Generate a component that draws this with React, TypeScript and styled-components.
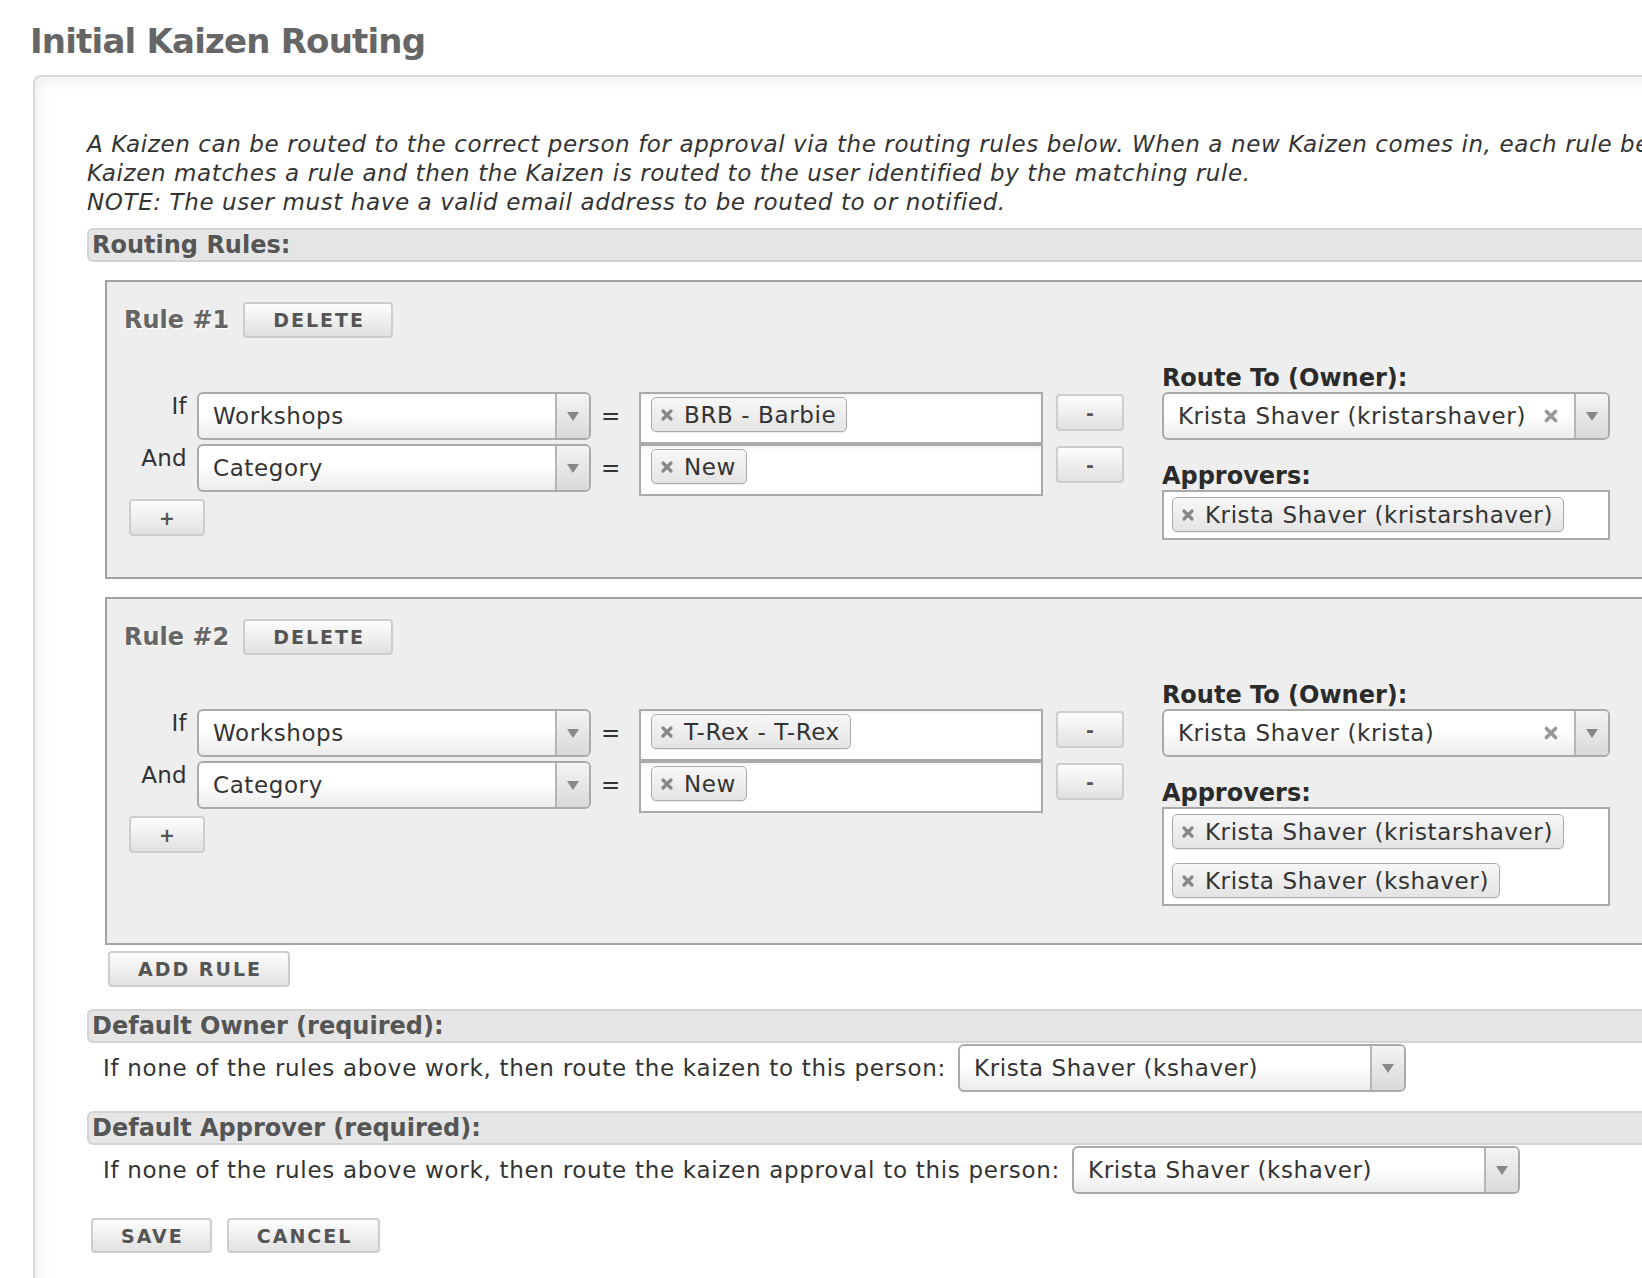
import styled, { createGlobalStyle } from "styled-components";

const GlobalStyle = createGlobalStyle`
  html, body {
    margin: 0;
    padding: 0;
    background: #fff;
    overflow: hidden;
  }
  body {
    font-family: "DejaVu Sans", Verdana, sans-serif;
    color: #333;
  }
`;

const Page = styled.div`
  width: 1800px;
  padding: 21px 0 0 30px;
`;

const Title = styled.h1`
  margin: 0 0 14px;
  font-size: 34px;
  line-height: 40px;
  font-weight: bold;
  letter-spacing: -0.8px;
  color: #666;
`;

const Panel = styled.div`
  margin-left: 3px;
  min-height: 1300px;
  padding: 53px 0 60px 52px;
  border: 2px solid #d9d9d9;
  border-right: none;
  border-radius: 8px 0 0 0;
  box-shadow: inset 5px 5px 14px rgba(0, 0, 0, 0.06);
`;

const Intro = styled.div`
  margin-bottom: 11px;
  font-size: 23px;
  line-height: 29px;
  font-style: italic;
  letter-spacing: 0.6px;
  color: #333;
  white-space: nowrap;
`;

const SectionBar = styled.div<{ $top?: number }>`
  box-sizing: border-box;
  height: 34px;
  margin-top: ${p => p.$top ?? 0}px;
  padding-left: 3px;
  background: #e5e5e5;
  border: 2px solid #d4d4d4;
  border-right: none;
  border-radius: 6px 0 0 6px;
  font-size: 24px;
  line-height: 30px;
  font-weight: bold;
  color: #555;
  white-space: nowrap;
`;

const RuleBox = styled.div`
  margin: 18px 0 0 18px;
  padding: 20px 0 37px 17px;
  background: #eee;
  border: 2px solid #a3a3a3;
  border-right: none;
`;

const RuleHead = styled.div`
  display: flex;
  align-items: center;
  gap: 14px;
  height: 36px;
`;

const RuleTitle = styled.span`
  font-size: 24px;
  font-weight: bold;
  color: #666;
  text-shadow: 1px 1px 0 #fff;
`;

const Button = styled.button<{ $h?: number }>`
  box-sizing: border-box;
  height: ${p => p.$h ?? 36}px;
  padding: 0 26px 0 28px;
  background: linear-gradient(to bottom, #fdfdfd, #e1e1e1);
  border: 2px solid #cdcdcd;
  border-radius: 4px;
  font-family: "DejaVu Sans", Verdana, sans-serif;
  font-size: 19px;
  font-weight: bold;
  letter-spacing: 2px;
  color: #555;
  cursor: pointer;
`;

const RuleBody = styled.div`
  display: flex;
  margin-top: 26px;
`;

const Conditions = styled.div`
  padding-top: 28px;
`;

const CondRow = styled.div`
  display: flex;
  align-items: flex-start;
  height: 52px;
`;

const CondLabel = styled.span`
  width: 63px;
  margin-right: 10px;
  text-align: right;
  font-size: 23px;
  line-height: 28px;
  letter-spacing: 0.3px;
`;

const Select = styled.div<{ $w: number }>`
  box-sizing: border-box;
  display: flex;
  align-items: center;
  width: ${p => p.$w}px;
  height: 48px;
  overflow: hidden;
  background: linear-gradient(to bottom, #fff 45%, #ececec);
  border: 2px solid #aaa;
  border-radius: 6px;
  font-size: 23px;
  letter-spacing: 0.6px;
  color: #333;
`;

const SelectText = styled.span`
  flex: 1;
  padding-left: 14px;
  white-space: nowrap;
`;

const ClearIcon = styled.span`
  display: flex;
  margin-right: 15px;
`;

const ArrowBox = styled.span`
  display: flex;
  align-items: center;
  justify-content: center;
  align-self: stretch;
  width: 32px;
  background: linear-gradient(to bottom, #f4f4f4, #d9d9d9);
  border-left: 2px solid #b5b5b5;
`;

const Arrow = styled.span`
  width: 0;
  height: 0;
  border-left: 6px solid transparent;
  border-right: 6px solid transparent;
  border-top: 9px solid #888;
`;

const Eq = styled.span`
  width: 38px;
  padding-left: 10px;
  font-size: 23px;
  line-height: 48px;
`;

const ValueBox = styled.div`
  box-sizing: border-box;
  width: 404px;
  height: 52px;
  padding: 3px 10px 0;
  background: #fff;
  border: 2px solid #aaa;
  box-shadow: inset 0 2px 3px rgba(0, 0, 0, 0.06);
`;

const Tag = styled.span`
  box-sizing: border-box;
  display: inline-flex;
  align-items: center;
  gap: 10px;
  height: 35px;
  padding: 0 10px 0 8px;
  background: linear-gradient(to bottom, #f7f7f7, #e4e4e4);
  border: 1.5px solid #aaa;
  border-radius: 5px;
  box-shadow: 0 1px 1px rgba(0, 0, 0, 0.08);
  font-size: 23px;
  letter-spacing: 0.6px;
  color: #333;
  white-space: nowrap;
`;

const MinusButton = styled(Button)`
  height: 37px;
  margin: 2px 0 0 13px;
`;

const PlusButton = styled(Button)`
  height: 37px;
  margin: 3px 0 0 5px;
`;

const RouteCol = styled.div`
  width: 448px;
  margin-left: 38px;
`;

const ColLabel = styled.div<{ $top?: number }>`
  margin-top: ${p => p.$top ?? 0}px;
  font-size: 24px;
  line-height: 28px;
  font-weight: bold;
  color: #2b2b2b;
`;

const ApproverBox = styled.div`
  box-sizing: border-box;
  display: flex;
  flex-direction: column;
  align-items: flex-start;
  gap: 14px;
  padding: 5px 8px 6px;
  background: #fff;
  border: 2px solid #aaa;
`;

const AddRow = styled.div`
  margin: 6px 0 0 21px;
`;

const DefaultRow = styled.div`
  display: flex;
  align-items: center;
  gap: 12px;
  margin-top: 1px;
  padding-left: 16px;
`;

const DefaultText = styled.span`
  font-size: 23px;
  letter-spacing: 0.7px;
  white-space: nowrap;
`;

const Actions = styled.div`
  display: flex;
  gap: 15px;
  margin: 24px 0 0 4px;
`;

const XMark = ({ size = 14, color = "#888" }: { size?: number; color?: string }) => (
  <svg width={size} height={size} viewBox="0 0 14 14">
    <path d="M3 3 L11 11 M11 3 L3 11" stroke={color} strokeWidth="3.2" strokeLinecap="round" />
  </svg>
);

const Dropdown = ({ value, width, clearable }: { value: string; width: number; clearable?: boolean }) => (
  <Select $w={width}>
    <SelectText>{value}</SelectText>
    {clearable && (
      <ClearIcon>
        <XMark size={16} color="#999" />
      </ClearIcon>
    )}
    <ArrowBox>
      <Arrow />
    </ArrowBox>
  </Select>
);

const Chip = ({ label }: { label: string }) => (
  <Tag>
    <XMark />
    {label}
  </Tag>
);

type Rule = {
  conditions: { field: string; value: string }[];
  owner: string;
  approvers: string[];
};

const rules: Rule[] = [
  {
    conditions: [
      { field: "Workshops", value: "BRB - Barbie" },
      { field: "Category", value: "New" },
    ],
    owner: "Krista Shaver (kristarshaver)",
    approvers: ["Krista Shaver (kristarshaver)"],
  },
  {
    conditions: [
      { field: "Workshops", value: "T-Rex - T-Rex" },
      { field: "Category", value: "New" },
    ],
    owner: "Krista Shaver (krista)",
    approvers: ["Krista Shaver (kristarshaver)", "Krista Shaver (kshaver)"],
  },
];

const RuleCard = ({ rule, index }: { rule: Rule; index: number }) => (
  <RuleBox>
    <RuleHead>
      <RuleTitle>Rule #{index + 1}</RuleTitle>
      <Button>DELETE</Button>
    </RuleHead>
    <RuleBody>
      <Conditions>
        {rule.conditions.map((c, i) => (
          <CondRow key={i}>
            <CondLabel>{i === 0 ? "If" : "And"}</CondLabel>
            <Dropdown value={c.field} width={394} />
            <Eq>=</Eq>
            <ValueBox>
              <Chip label={c.value} />
            </ValueBox>
            <MinusButton>-</MinusButton>
          </CondRow>
        ))}
        <PlusButton>+</PlusButton>
      </Conditions>
      <RouteCol>
        <ColLabel>Route To (Owner):</ColLabel>
        <Dropdown value={rule.owner} width={448} clearable />
        <ColLabel $top={22}>Approvers:</ColLabel>
        <ApproverBox>
          {rule.approvers.map(a => (
            <Chip key={a} label={a} />
          ))}
        </ApproverBox>
      </RouteCol>
    </RuleBody>
  </RuleBox>
);

export default function App() {
  return (
    <>
      <GlobalStyle />
      <Page>
        <Title>Initial Kaizen Routing</Title>
        <Panel>
          <Intro>
            <div>
              A Kaizen can be routed to the correct person for approval via the routing rules below. When a new Kaizen comes in, each rule below is checked until the
            </div>
            <div>Kaizen matches a rule and then the Kaizen is routed to the user identified by the matching rule.</div>
            <div>NOTE: The user must have a valid email address to be routed to or notified.</div>
          </Intro>
          <SectionBar>Routing Rules:</SectionBar>
          {rules.map((r, i) => (
            <RuleCard key={i} rule={r} index={i} />
          ))}
          <AddRow>
            <Button>ADD RULE</Button>
          </AddRow>
          <SectionBar $top={22}>Default Owner (required):</SectionBar>
          <DefaultRow>
            <DefaultText>If none of the rules above work, then route the kaizen to this person:</DefaultText>
            <Dropdown value="Krista Shaver (kshaver)" width={448} />
          </DefaultRow>
          <SectionBar $top={19}>Default Approver (required):</SectionBar>
          <DefaultRow>
            <DefaultText>If none of the rules above work, then route the kaizen approval to this person:</DefaultText>
            <Dropdown value="Krista Shaver (kshaver)" width={448} />
          </DefaultRow>
          <Actions>
            <Button $h={35}>SAVE</Button>
            <Button $h={35}>CANCEL</Button>
          </Actions>
        </Panel>
      </Page>
    </>
  );
}
